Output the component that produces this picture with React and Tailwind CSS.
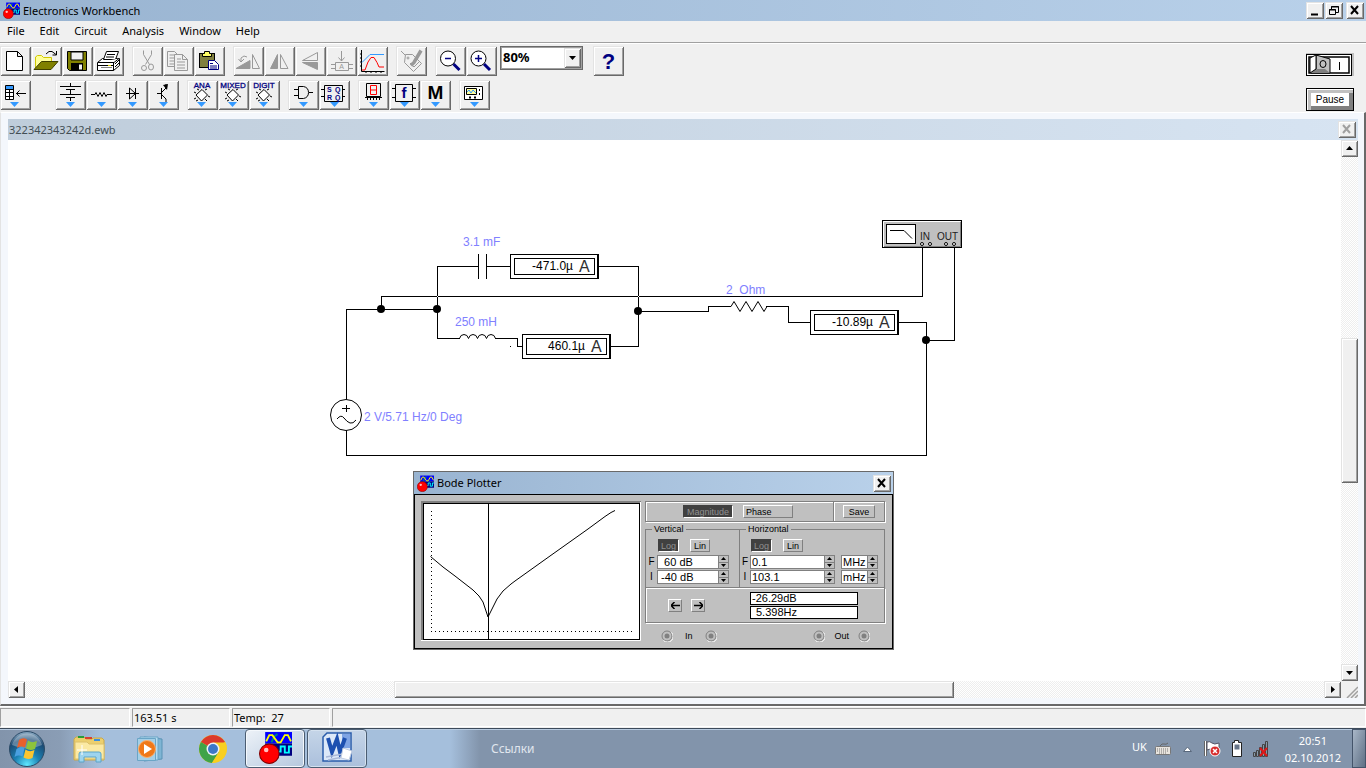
import React from 'react';
import clsx from 'clsx';

const raised = 'bg-[#f0f0f0] shadow-[inset_1px_1px_0_#e3e3e3,inset_-1px_-1px_0_#696969,inset_2px_2px_0_#fff,inset_-2px_-2px_0_#a0a0a0]';
const etched = 'border border-[#808080] shadow-[1px_1px_0_#fff,inset_1px_1px_0_#fff]';
const track = 'bg-[repeating-conic-gradient(#ffffff_0_25%,#eeeeee_0_50%)] bg-[length:2px_2px]';

const AppIcon = ({ size }) => (
    <svg width={size} height={size} viewBox="0 0 32 32">
        <path d="M6 1h26v11H6z" fill="#0000ff" />
        <path d="M6 12h26v12H6z" fill="#000080" />
        <path d="M12 11l3-6 3-2" fill="none" stroke="#008080" strokeWidth="2" />
        <path d="M7 10l3-6h3l5 7h3l4-7h3l3 6" fill="none" stroke="#ffff00" strokeWidth="1.8" />
        <path d="M17 20h4v-5h4v6h4v-6h3" fill="none" stroke="#00ffff" strokeWidth="1.8" />
        <circle cx="10" cy="22" r="9.5" fill="#ff0000" stroke="#800000" />
        <circle cx="7" cy="18.500" r="2.200" fill="#ffc0c0" />
    </svg>
);

const TRI = <path d="M11 22h9l-4.500 5z" fill="#3399ff" />;
const TRI_LEFT = <path d="M10 22h9l-4.500 5z" fill="#3399ff" />;
const CHIP = (
    <g stroke="#000" fill="none">
        <path d="M15 9.500l5.500 5.500-6 6-5.500-6z" fill="#fff" />
        <path d="M12 10l-2-1M9 13l-2-1M18 19l2 2M21 16l2 1M18 10l2-1M9 18l-2 1M11 20l-2 1" />
    </g>
);
const chipLabel = (text) => (
    <text x="15" y="8" textAnchor="middle" fontSize="8" fill="#000080" stroke="#000080" strokeWidth="0.3">{text}</text>
);

const ICONS = {
    new: <path d="M6.500 5.500h11l5 5v14h-16zM17.500 5.500v5h5" fill="#fff" stroke="#000" />,
    open: (
        <g>
            <path d="M4.500 22v-11l2-1.500h4l2 2h8v4h-9l-6 7z" fill="#ffff99" stroke="#d0c800" />
            <path d="M10.500 15.500h16.500l-7 8h-17z" fill="#808000" stroke="#404000" />
            <path d="M15 8l3-2.500h3l4 3M25.500 5v4h-4" fill="none" stroke="#000" />
        </g>
    ),
    save: (
        <g>
            <path d="M5.500 5.500h19v19h-17l-2-2z" fill="#808000" stroke="#000" />
            <path d="M9 6h12v8H9z" fill="#f0f0f0" stroke="#000" />
            <path d="M9 17h12v7H9z" fill="#000" />
            <path d="M17 18.500h3v5h-3z" fill="#f0f0f0" />
        </g>
    ),
    print: (
        <g stroke="#000" fill="#fff">
            <path d="M4.500 16.500l5-4h17v7l-6 5h-16z" />
            <path d="M10.500 13.500l3-8h12l-3 8z" />
            <path d="M14 8.500h8M13 11h8M5 16.500h16l5-4M5 19.500h16M20.500 16.500v8M22 18l4-4M22 21l4-4" />
            <path d="M8 21.500h11" stroke="#808080" />
            <path d="M15 19.500h3" stroke="#e0d000" />
        </g>
    ),
    cut: (
        <g stroke="#999" fill="none">
            <path d="M11.500 4.500v4l6 10M19.500 4.500v4l-6 10" />
            <circle cx="12" cy="22" r="2.500" />
            <ellipse cx="19" cy="21" rx="2.500" ry="3" />
        </g>
    ),
    copy: (
        <g stroke="#999" fill="#f0f0f0">
            <path d="M4.500 5.500h7l4 4v11h-11zM6.500 9h5M6.500 12h6M6.500 15h6M6.500 18h6" />
            <path d="M11.500 8.500h8l5 5v11h-13zM19.500 8.500v5h5M14 13h4M14 16h8M14 19h8M14 22h8" />
        </g>
    ),
    paste: (
        <g>
            <rect x="5.500" y="7.500" width="15" height="14" fill="#808040" stroke="#000" />
            <path d="M8.500 10.500v-3h2v-2h5v2h2v3z" fill="#ffff66" stroke="#000" />
            <path d="M14.500 14.500h6l4 4v5h-10z" fill="#fff" stroke="#000080" />
            <path d="M16 17.500h3M16 20h7M16 22h7" stroke="#000080" />
        </g>
    ),
    rotate: (
        <g stroke="#999">
            <path d="M3 22.500l14-8v8z" fill="#999" />
            <path d="M19.500 22.500v-14l7 14z" fill="none" />
            <path d="M14 11l-3-1-3 2v4M5.500 13l2.500 3 3-3" fill="none" />
        </g>
    ),
    flipH: (
        <g stroke="#999">
            <path d="M13.500 8.500v14h-7z" fill="#999" />
            <path d="M16.500 8.500v14h7.500z" fill="none" />
        </g>
    ),
    flipV: (
        <g stroke="#999">
            <path d="M22.500 6.500v8h-15z" fill="none" />
            <path d="M7.500 16.500h15v7z" fill="#999" />
        </g>
    ),
    subcircuit: (
        <g stroke="#999" fill="none">
            <path d="M15.500 5v10M12.500 11.500l3 3.500 3-3.500M9.500 16.500h13v8h-13zM5 18.500h4M5 22.500h4M23 18.500h4M23 22.500h4" />
            <text x="15.500" y="23" fontSize="7" stroke="none" fill="#999" textAnchor="middle">A</text>
        </g>
    ),
    graph: (
        <g fill="none">
            <path d="M4.500 4v21.500h23M3 8h2M3 12h2M3 16h2M3 20h2M9 25v2M14 25v2M19 25v2M24 25v2" stroke="#000" />
            <path d="M5 16.500l8-8h14" stroke="#3399ff" />
            <path d="M5 24h3l3-8 3-4.500h3l3 5 2 4.500h5" stroke="#ff0000" />
        </g>
    ),
    pen: (
        <g stroke="#999" fill="none">
            <path d="M5 5l4 4M9.500 8.500h7l9 9-8 8-9-9z" />
            <circle cx="12" cy="12" r="1" />
            <path d="M25 4.500l-7 12-3 3" strokeWidth="3.500" />
            <path d="M14 17l4 4 6-6" />
        </g>
    ),
    zoomOut: (
        <g>
            <circle cx="13" cy="12.500" r="7.500" fill="#fff" stroke="#000" />
            <path d="M10 12.500h6" stroke="#000080" strokeWidth="1.500" />
            <path d="M18.500 18l6 6" stroke="#000080" strokeWidth="3" />
        </g>
    ),
    zoomIn: (
        <g>
            <circle cx="12.500" cy="12.500" r="7.500" fill="#fff" stroke="#000" />
            <path d="M9 12.500h7M12.500 9v7" stroke="#000080" strokeWidth="1.500" />
            <path d="M18 18l6 6" stroke="#000080" strokeWidth="3" />
        </g>
    ),
    help: <text x="15.500" y="23" fontSize="22" fontWeight="bold" fill="#000080" textAnchor="middle">?</text>,
    parts: (
        <g>
            <path d="M5.500 5.500h8v14h-8z" fill="#fff" stroke="#000" />
            <path d="M6 6h7v3H6z" fill="#3399ff" />
            <path d="M5 9.500h9M5 12.500h9M5 16.500h9M9.500 9v11" stroke="#000" />
            <path d="M16 13.500h10M19.500 10.500l-3 3 3 3" fill="none" stroke="#000" />
            {TRI_LEFT}
        </g>
    ),
    battery: <g><path d="M5 6.500h21M15.500 3v3M11 9.500h9M5 14.500h21M11 17.500h9M15.500 10v4M15.500 18v3" stroke="#000" />{TRI}</g>,
    resistor: <g><path d="M5 14.500h4l1-2 2 4 2-4 2 4 2-4 2 4 1-2h5" fill="none" stroke="#000" />{TRI}</g>,
    diode: <g><path d="M9 13.500h13M12.500 8v11l6-5.500zM18.500 8v11" fill="none" stroke="#000" />{TRI}</g>,
    transistor: (
        <g>
            <path d="M9 13.500h4M13.500 8v11M14 12l4-4v-4M14 15l4 4v3" fill="none" stroke="#000" />
            <path d="M15 5l5-1-1 6z" />
            {TRI}
        </g>
    ),
    ana: <g>{CHIP}{chipLabel('ANA')}{TRI_LEFT}</g>,
    mixed: <g>{CHIP}{chipLabel('MIXED')}{TRI_LEFT}</g>,
    digit: <g>{CHIP}{chipLabel('DIGIT')}{TRI_LEFT}</g>,
    gate: <g><path d="M10.500 6.500h5q5 1 5 6t-5 6h-5zM6 9.500h4M6 15.500h4M21 12.500h4" fill="none" stroke="#000" />{TRI}</g>,
    flipflop: (
        <g>
            <path d="M5.500 5.500h18v16h-18zM2 9.500h3M2 16.500h3M24 9.500h2M24 16.500h2" fill="none" stroke="#000" />
            <g fontSize="7" fontWeight="bold" fill="#000080">
                <text x="8" y="12">S</text><text x="16" y="12">Q</text>
                <text x="8" y="20">R</text><text x="16" y="20">Q</text>
            </g>
            {TRI}
        </g>
    ),
    display: (
        <g fill="none">
            <path d="M8.500 3.500h14v13h-14zM7 17.500h17M9.500 18v2M12.500 18v2M15.500 18v2M18.500 18v2M21.500 18v2" stroke="#000" />
            <path d="M12.500 5.500h6v9h-6zM12.500 10h6" stroke="#ff0000" />
            {TRI}
        </g>
    ),
    func: (
        <g>
            <path d="M6.500 4.500h17v17h-17zM3 8.500h3M3 17.500h3M24 8.500h3M24 17.500h3" fill="none" stroke="#000" />
            <text x="15" y="18" fontSize="15" fontWeight="bold" fill="#000080" textAnchor="middle">f</text>
            {TRI}
        </g>
    ),
    misc: <g><text x="15.500" y="19" fontSize="19" fontWeight="bold" textAnchor="middle">M</text>{TRI}</g>,
    scope: (
        <g>
            <path d="M5.500 6.500h18v13h-18z" fill="#fff" stroke="#000" />
            <path d="M7.500 8.500h10v6h-10z" fill="#ffffa0" stroke="#000" />
            <path d="M8 12l2-2 2 3 2-3 3 3" fill="none" stroke="#3399ff" />
            <path d="M20 9h1v2h-1zM20 13h1v2h-1zM10 16.500h2v2h-2zM15 16.500h2v2h-2z" fill="#000" />
            {TRI}
        </g>
    ),
};

const ToolGroup = ({ names, className }) => (
    <div className={clsx('flex', className)}>
        {names.map((name) => (
            <button key={name} type="button" aria-label={name} className={clsx('h-[30px] w-[31px]', raised)}>
                <svg width="31" height="30" viewBox="0 0 31 30" fontFamily="Liberation Sans, sans-serif">{ICONS[name]}</svg>
            </button>
        ))}
    </div>
);

const CaptionButton = ({ label, children, className }) => (
    <button type="button" aria-label={label} className={clsx('h-[17px] w-[18px]', raised, className)}>
        <svg width="18" height="17" viewBox="0 0 18 17">{children}</svg>
    </button>
);
const CROSS = 'M5 4l7 8M12 4l-7 8';

const TitleBar = () => (
    <header className="flex h-[21px] shrink-0 items-center bg-linear-to-r from-[#99b4d1] to-[#b9d1ea] pr-[2px] pl-[3px]">
        <AppIcon size={17} />
        <h1 className="ml-[3px] flex-1">Electronics Workbench</h1>
        <CaptionButton label="Minimize"><path d="M5 12.500h7" stroke="#000" strokeWidth="2" /></CaptionButton>
        <CaptionButton label="Restore" className="ml-px">
            <path d="M6.500 7V4.500h7v6H11M6 5h8M4.500 7.500h6v5h-6zM4 8h7" fill="none" stroke="#000" />
        </CaptionButton>
        <CaptionButton label="Close" className="ml-[3px]"><path d={CROSS} stroke="#000" strokeWidth="2" /></CaptionButton>
    </header>
);

const MenuBar = () => (
    <nav className="flex h-[22px] shrink-0 items-center gap-[15px] border-b border-[#a0a0a0] pb-[2px] pl-[7px]">
        {['File', 'Edit', 'Circuit', 'Analysis', 'Window', 'Help'].map((m) => (
            <button key={m} type="button">{m}</button>
        ))}
    </nav>
);

const Toolbars = () => (
    <div className="flex shrink-0 justify-between border-t border-white pt-[2px]">
        <div className="flex flex-col gap-1">
            <div className="flex gap-2">
                <ToolGroup names={['new', 'open', 'save', 'print']} />
                <ToolGroup names={['cut', 'copy', 'paste']} />
                <ToolGroup names={['rotate', 'flipH', 'flipV', 'subcircuit', 'graph']} />
                <ToolGroup names={['pen']} />
                <ToolGroup names={['zoomOut', 'zoomIn']} />
                <div className="relative -ml-[5px] h-6 w-[83px]">
                    <select aria-label="Zoom" className="h-full w-full appearance-none border border-[#696969] bg-white pb-[2px] pl-[2px] text-[13px] leading-4 font-bold shadow-[inset_0_0_0_1px_#a0a0a0]">
                        <option>80%</option>
                    </select>
                    <span className={clsx('pointer-events-none absolute top-[2px] right-[2px] flex h-5 w-[17px] items-center justify-center', raised)}>
                        <svg width="7" height="4"><path d="M0 0h7l-3.500 4z" /></svg>
                    </span>
                </div>
                <ToolGroup names={['help']} className="ml-[2px]" />
            </div>
            <div className="flex gap-2">
                <ToolGroup names={['parts']} className="mr-4" />
                <ToolGroup names={['battery', 'resistor', 'diode', 'transistor']} />
                <ToolGroup names={['ana', 'mixed', 'digit']} />
                <ToolGroup names={['gate', 'flipflop']} />
                <ToolGroup names={['display', 'func', 'misc']} />
                <ToolGroup names={['scope']} />
            </div>
        </div>
        <div className="mt-[7px] mr-3 flex flex-col items-start gap-[12px]">
            <button type="button" aria-label="Power" className="border-t border-r-2 border-[#c0c0c0]">
                <svg width="46" height="22" viewBox="0 0 46 22" className="block">
                    <rect x="0.500" y="0.500" width="45" height="21" fill="#fff" stroke="#000" />
                    <rect x="3" y="3" width="40" height="16" fill="#fff" stroke="#000" strokeWidth="1.500" />
                    <path d="M10 1l14 4v14H5l5-4z" fill="#c0c0c0" stroke="#000" />
                    <path d="M4 19l6-4h9l5 4z" fill="#808080" />
                    <path d="M4 4l6-3v14l-6 4z" fill="#fff" stroke="#000" />
                    <ellipse cx="17" cy="10" rx="3" ry="3.500" fill="none" stroke="#000" />
                    <path d="M33.500 8v8" stroke="#000" />
                </svg>
            </button>
            <button type="button" className="h-[23px] w-12 border border-black bg-white font-['Liberation_Sans',sans-serif] text-[10px] shadow-[inset_1px_1px_0_#fff,inset_4px_4px_0_#c0c0c0,inset_-4px_-4px_0_#808080]">
                Pause
            </button>
        </div>
    </div>
);

const Meter = ({ x, y, value }) => (
    <g transform={`translate(${x} ${y})`}>
        <rect x="0.500" y="0.500" width="88" height="24" fill="#fff" stroke="#000" />
        <path d="M87.500 0v25" stroke="#000" />
        <rect x="4.500" y="4.500" width="80" height="16" fill="#fff" stroke="#000" />
        <text x="63" y="16" textAnchor="end" fontSize="12">{value}</text>
        <text x="69" y="18" fontSize="16" fill="#303030">A</text>
    </g>
);

const Circuit = () => (
    <svg width="960" height="480" viewBox="8 140 960 480" className="block shrink-0" fontFamily="Liberation Sans, sans-serif">
        <g fill="none" stroke="#000" shapeRendering="crispEdges">
            <path d="M381.500 309V296.500H922.500V247M954.500 247V340.500H926" />
            <path d="M346.500 400V309.500H437.500M437.500 266V338.500H460M437 266.500H478M487 266.500H510M599 266.500H638.500V346.500H610" />
            <path d="M495 338.500H517.500V346.500H522M638 311.500H708.500V306.500H731M766 306.500H788.500V322.500H810" />
            <path d="M899 322.500H926.500V455.500H346.500V430" />
            <path d="M478.500 254v25M486.500 254v25M510 346.500h1" />
        </g>
        <path d="M437 296.500h1M638 296.500h1" stroke="#fff" />
        <g fill="none" stroke="#000">
            <path d="M459.500 338.500q1-4 4.500-4t4.500 4q1-4 4.500-4t4.500 4q1-4 4.500-4t4.500 4q1-4 4.500-4t4.500 4" />
            <path d="M731 306.500l3-5 6 10 6-10 6 10 6-10 6 10 3-5" />
            <circle cx="346" cy="415" r="15.500" fill="#fff" />
            <path d="M342 408.500h8M346.500 405v7M337 419q4-5 7-1t6 5 6-3" />
        </g>
        <circle cx="381" cy="309" r="4" />
        <circle cx="437" cy="309" r="4" />
        <circle cx="638" cy="311" r="4" />
        <circle cx="926" cy="340" r="4" />
        <Meter x={510} y={254} value="-471.0µ" />
        <Meter x={522} y={334} value="460.1µ" />
        <Meter x={810} y={310} value="-10.89µ" />
        <g fontSize="12" fill="#8080ff">
            <text x="463" y="246">3.1 mF</text>
            <text x="455" y="326">250 mH</text>
            <text x="726" y="294" xmlSpace="preserve">2  Ohm</text>
            <text x="364" y="421">2 V/5.71 Hz/0 Deg</text>
        </g>
        <rect x="882.500" y="220.500" width="79" height="27" fill="#c0c0c0" stroke="#000" />
        <path d="M883.500 247v-25.500h77" fill="none" stroke="#fff" />
        <path d="M884 246.500h76.500V222" fill="none" stroke="#808080" />
        <rect x="886.500" y="224.500" width="29" height="19" fill="#fff" stroke="#000" />
        <path d="M890 230.500h14l8 8" fill="none" stroke="#000" />
        <g fontSize="10" fill="#202020">
            <text x="920" y="240">IN</text>
            <text x="937" y="240">OUT</text>
        </g>
        <g fill="#fff" stroke="#000">
            <circle cx="922" cy="244" r="1.500" />
            <circle cx="930" cy="244" r="1.500" />
            <circle cx="946" cy="244" r="1.500" />
            <circle cx="954" cy="244" r="1.500" />
        </g>
    </svg>
);

const TinyButton = ({ children, pressed, className, ...rest }) => (
    <button
        type="button"
        aria-pressed={pressed}
        className={clsx(
            'flex h-[13px] items-center border leading-3',
            pressed ? 'border-[#404040] border-r-white border-b-white bg-[#404040] text-[#909090]' : 'border-white border-r-[#808080] border-b-[#808080] bg-[#c0c0c0]',
            className
        )}
        {...rest}
    >
        {children}
    </button>
);

const Spinner = ({ label, value, className }) => (
    <span className="flex h-[14px]">
        <input aria-label={label} defaultValue={value} className={clsx('border border-[#808080] border-r-0 bg-white text-[11px] leading-3 whitespace-pre', className)} />
        <span className="flex w-[11px] flex-col border border-[#808080]">
            <button type="button" aria-label={`${label} up`} className="flex flex-1 items-center justify-center border-b border-[#808080]">
                <svg width="5" height="3"><path d="M0 3h5l-2.500-3z" /></svg>
            </button>
            <button type="button" aria-label={`${label} down`} className="flex flex-1 items-center justify-center">
                <svg width="5" height="3"><path d="M0 0h5l-2.500 3z" /></svg>
            </button>
        </span>
    </span>
);

const Port = () => (
    <svg width="12" height="12" viewBox="0 0 12 12">
        <circle cx="6" cy="6" r="5" fill="#c0c0c0" stroke="#808080" />
        <path d="M10.500 2.500a5.500 5.500 0 0 1-8 8" fill="none" stroke="#fff" />
        <circle cx="6" cy="6" r="2.500" fill="#808080" />
    </svg>
);

const Plot = () => (
    <svg width="220" height="140" viewBox="421 501 220 140" className="block">
        <path d="M421 641V501h220" fill="none" stroke="#808080" strokeWidth="4" />
        <path d="M421 640.500h219.500V502" fill="none" stroke="#fff" />
        <rect x="423.500" y="503.500" width="216" height="136" fill="#fff" stroke="#000" />
        <g fill="none" stroke="#000" shapeRendering="crispEdges">
            <path d="M431.500 511v121M431 631.500h202" strokeDasharray="1 3" />
            <path d="M488.500 504v135" />
        </g>
        <path
            d="M430.500 556.500L443 567l12 9 18 14 6 6 4 6 3 9 2 6M488 617l9-18 6-8 8-7 4-3 35-25 38-27 17-12.500 6-4 4-2"
            fill="none"
            stroke="#000"
        />
    </svg>
);

const BodePlotter = () => (
    <section className="absolute top-[331px] left-[405px] w-[481px] border border-[#696969] bg-[#c0c0c0]">
        <div className="flex h-[22px] items-center bg-linear-to-r from-[#99b4d1] to-[#b9d1ea] pr-[2px] pl-[3px]">
            <AppIcon size={17} />
            <h2 className="ml-[3px] flex-1">Bode Plotter</h2>
            <CaptionButton label="Close plotter"><path d={CROSS} stroke="#000" strokeWidth="2" /></CaptionButton>
        </div>
        <div className="flex gap-1 border border-black pt-[6px] pr-[7px] pl-[6px] font-['Liberation_Sans',sans-serif] text-[9px] leading-3">
            <Plot />
            <div className="flex flex-1 flex-col">
                <div className={clsx('flex h-[21px]', etched)}>
                    <div className="flex flex-1 items-center gap-[10px] pl-[37px]">
                        <TinyButton pressed className="w-[50px] justify-center">Magnitude</TinyButton>
                        <TinyButton className="w-[50px] pl-[2px]">Phase</TinyButton>
                    </div>
                    <div className="flex items-center border-l border-[#808080] pr-[9px] pl-[9px] shadow-[inset_1px_0_0_#fff]">
                        <TinyButton className="w-8 justify-center">Save</TinyButton>
                    </div>
                </div>
                <div className="mt-px flex">
                    <fieldset className="w-[94px] border border-r-0 border-[#808080] pb-[2px]">
                        <legend className="ml-[6px] px-[2px]">Vertical</legend>
                        <div className="mt-[4px] mb-[3px] flex gap-[11px] pl-3">
                            <TinyButton pressed className="w-[21px] justify-center">Log</TinyButton>
                            <TinyButton className="w-5 justify-center">Lin</TinyButton>
                        </div>
                        {[['F', '  60 dB'], ['I', ' -40 dB']].map(([k, v]) => (
                            <label key={k} className="mb-px flex items-center">
                                <span className="w-[11px] text-center text-[10px]">{k}</span>
                                <Spinner label={`Vertical ${k}`} value={v} className="w-[61px]" />
                            </label>
                        ))}
                    </fieldset>
                    <fieldset className="flex-1 border border-[#808080] pb-[2px]">
                        <legend className="ml-[6px] px-[2px]">Horizontal</legend>
                        <div className="mt-[4px] mb-[3px] flex gap-[11px] pl-[11px]">
                            <TinyButton pressed className="w-[21px] justify-center">Log</TinyButton>
                            <TinyButton className="w-5 justify-center">Lin</TinyButton>
                        </div>
                        {[['F', '0.1', 'MHz'], ['I', '103.1', 'mHz']].map(([k, v, u]) => (
                            <div key={k} className="mb-px flex items-center">
                                <span className="w-[10px] text-center text-[10px]">{k}</span>
                                <Spinner label={`Horizontal ${k}`} value={v} className="w-[74px] pl-px" />
                                <span className="w-[6px]" />
                                <Spinner label={`Horizontal ${k} unit`} value={u} className="w-[26px] pl-px" />
                            </div>
                        ))}
                    </fieldset>
                </div>
                <div className="flex h-[35px] items-center border border-t-0 border-[#808080] shadow-[1px_1px_0_#fff,inset_1px_1px_0_#fff]">
                    <div className="flex w-[104px] gap-[9px] pl-[22px]">
                        <TinyButton aria-label="Cursor left" className="w-[14px] justify-center">
                            <svg width="9" height="7"><path d="M0 3.500h9M3.500 0L0 3.500 3.500 7" fill="none" stroke="#000" strokeWidth="1.500" /></svg>
                        </TinyButton>
                        <TinyButton aria-label="Cursor right" className="w-[14px] justify-center">
                            <svg width="9" height="7"><path d="M0 3.500h9M5.500 0L9 3.500 5.500 7" fill="none" stroke="#000" strokeWidth="1.500" /></svg>
                        </TinyButton>
                    </div>
                    <div className="flex flex-col gap-px text-[11px]">
                        <output className="h-[13px] w-[108px] border border-black bg-white pl-px leading-[11px]">-26.29dB</output>
                        <output className="h-[13px] w-[108px] border border-black bg-white pl-[5px] leading-[11px]">5.398Hz</output>
                    </div>
                </div>
                <div className="flex h-[25px] items-center justify-between pr-[15px] pl-4">
                    <span className="flex items-center gap-3"><Port />In<Port /></span>
                    <span className="flex items-center gap-[9px]"><Port />Out<Port /></span>
                </div>
            </div>
        </div>
    </section>
);

const ScrollArrow = ({ label, d }) => (
    <button type="button" aria-label={label} className={clsx('h-[17px] w-[17px] shrink-0', raised)}>
        <svg width="17" height="17" viewBox="0 0 17 17"><path d={d} /></svg>
    </button>
);

const DocumentWindow = () => (
    <main className="flex min-h-0 flex-1 flex-col border-t border-r-2 border-b-2 border-l border-t-white border-r-[#696969] border-b-[#696969] border-l-[#e3e3e3] bg-[#f4f7fc] px-[6px] pt-[6px] pb-[6px] pl-[7px]">
        <div className="flex h-[21px] shrink-0 items-center justify-between bg-linear-to-r from-[#bfcddb] to-[#d7e4f2] pr-[2px] pl-px text-[#434e54]">
            <h2>322342343242d.ewb</h2>
            <CaptionButton label="Close document"><path d={CROSS} stroke="#a0a0a0" strokeWidth="2" /></CaptionButton>
        </div>
        <div className="flex min-h-0 flex-1">
            <div className="relative min-w-0 flex-1 overflow-hidden bg-white">
                <Circuit />
                <BodePlotter />
            </div>
            <div className={clsx('flex w-[17px] flex-col', track)}>
                <ScrollArrow label="Scroll up" d="M5 10h7L8.500 6z" />
                <div className="flex-[181]" />
                <div className={clsx('flex-[144]', raised)} />
                <div className="flex-[181]" />
                <ScrollArrow label="Scroll down" d="M5 7h7l-3.500 4z" />
            </div>
        </div>
        <div className="flex h-[17px] shrink-0">
            <div className={clsx('flex flex-1', track)}>
                <ScrollArrow label="Scroll left" d="M10 5v7L6 8.500z" />
                <div className="flex-[369]" />
                <div className={clsx('flex-[560]', raised)} />
                <div className="flex-[370]" />
                <ScrollArrow label="Scroll right" d="M7 5v7l4-3.500z" />
            </div>
            <svg width="17" height="17" className="bg-[#f0f0f0]">
                <path d="M6 17L17 6M10 17l7-7M14 17l3-3" stroke="#a0a0a0" strokeWidth="1.500" />
            </svg>
        </div>
    </main>
);

const StatusBar = () => (
    <footer className="flex h-[22px] shrink-0 gap-[2px] border-t border-white pt-px pb-px">
        {[['w-[130px]', ''], ['w-[98px]', '163.51 s'], ['w-[98px]', 'Temp:  27'], ['flex-1', '']].map(([w, text], i) => (
            <div key={i} className={clsx('border border-[#a0a0a0] border-r-white border-b-white pl-px leading-[17px] whitespace-pre', w)}>{text}</div>
        ))}
    </footer>
);

const StartOrb = () => (
    <svg width="38" height="38" viewBox="0 0 38 38">
        <defs>
            <radialGradient id="orb" cx="0.5" cy="0.95" r="0.9">
                <stop offset="0" stopColor="#5fe8ff" />
                <stop offset="0.4" stopColor="#1c82b4" />
                <stop offset="0.8" stopColor="#1b4a73" />
                <stop offset="1" stopColor="#7e9fba" />
            </radialGradient>
        </defs>
        <circle cx="19" cy="19" r="17.500" fill="url(#orb)" stroke="#2b4a66" />
        <path d="M4 15a15.500 15.500 0 0 1 30 0q-15 7-30 0z" fill="#fff" opacity="0.3" />
        <path d="M11 10q4-3 8-.5l-2 8q-4-2-8 .5z" fill="#e8602c" />
        <path d="M20 10.500q4 3 9 .5l-2 8q-5 2-9-.5z" fill="#8cc43c" />
        <path d="M8.500 19q4-3 8-.5l-2 8q-4-2-8 .5z" fill="#4aa0e0" />
        <path d="M17.500 19.500q4 3 9 .5l-2 8q-5 2-9-.5z" fill="#fcc530" />
    </svg>
);

const ExplorerIcon = () => (
    <svg width="32" height="30" viewBox="0 0 32 30">
        <path d="M1 5l2-2h8l2 2h6l1-1h9l2 2v20H1z" fill="#eccf6e" stroke="#c8a84a" />
        <path d="M5 2h6v2H5z" fill="#2a9d3a" /><path d="M12 3h7v2h-7z" fill="#d84030" /><path d="M21 5h6v2h-6z" fill="#3a8ee0" />
        <path d="M2 8h12l2 2h15v15H2z" fill="#fbe9a3" stroke="#dcc06a" />
        <path d="M6 28V20q0-2 2-2h18q2 0 2 2v8h-5v-5H11v5z" fill="#9ed4ee" stroke="#5ba4c8" />
        <path d="M9 11v10M4 16h10" stroke="#fff" />
    </svg>
);

const PlayerIcon = () => (
    <svg width="30" height="28" viewBox="0 0 30 28">
        <path d="M8 2l18 2v20l-18 2z" fill="#7fb5d4" stroke="#5a93b5" />
        <path d="M4 2h18v23H4z" fill="#b6dcf0" stroke="#6aa5c6" />
        <path d="M1.500 3.500h18v22h-18z" fill="#a5cfe6" stroke="#6aa5c6" />
        <circle cx="11" cy="14" r="8.500" fill="#f07818" stroke="#f8b070" />
        <path d="M8 9l8 5-8 5z" fill="#fff" />
    </svg>
);

const ChromeIcon = () => (
    <svg width="30" height="30" viewBox="0 0 30 30">
        <circle cx="15" cy="15" r="14" fill="#f8cf20" />
        <path d="M15 15L2.900 8a14 14 0 0 1 24.200 0z" fill="#db3a2c" />
        <path d="M2.900 8a14 14 0 0 0 11 21l7-11-6-3z" fill="#3fa348" />
        <path d="M15 8.500h12.500q3 8-2.500 14t-11 6.500L21 18z" fill="#f8cf20" />
        <circle cx="15" cy="15" r="6.500" fill="#eef3f8" />
        <circle cx="15" cy="15" r="5" fill="#3c78c8" />
    </svg>
);

const WordIcon = () => (
    <svg width="32" height="32" viewBox="0 0 32 32">
        <path d="M6 2h24v28H2V6z" fill="#dce8f8" stroke="#2a5caa" strokeWidth="1.500" />
        <path d="M21 3h8v14h-8z" fill="#7fa4e4" />
        <path d="M7 7l4 14 5-13 3 13 5-14" fill="none" stroke="#1d50b0" strokeWidth="4" />
        <path d="M5 26l17-3M7 29l15-3" stroke="#a9b8d8" strokeWidth="1.500" />
        <path d="M22 17l9 3-3 9-8-2z" fill="#fff" stroke="#c0cce0" />
    </svg>
);

const Taskbar = () => (
    <div className="flex h-10 shrink-0 items-stretch border-t border-[#3c4a5a] bg-[linear-gradient(90deg,#8294ab_0,#8a9db5_60px,#a5bfdc_100px,#a5bfdc_450px,#8294ab_480px)] text-white shadow-[inset_0_1px_0_#b8cbe0]">
        <button type="button" aria-label="Start" className="flex w-[58px] items-center pl-2"><StartOrb /></button>
        <button type="button" aria-label="Explorer" className="flex w-[62px] items-center justify-center"><ExplorerIcon /></button>
        <button type="button" aria-label="Media Player" className="flex w-[62px] items-center justify-center"><PlayerIcon /></button>
        <button type="button" aria-label="Chrome" className="flex w-[62px] items-center justify-center"><ChromeIcon /></button>
        <button type="button" aria-label="Electronics Workbench" className="ml-px flex w-[60px] items-start justify-center rounded-sm border border-[#4b5d72] bg-linear-to-br from-[#edf2f8] to-[#b5c8de] pt-px shadow-[inset_0_0_0_1px_#f4f8fc]"><AppIcon size={33} /></button>
        <button type="button" aria-label="Word" className="ml-[2px] flex w-[60px] items-start justify-center rounded-sm border border-[#4b5d72] bg-linear-to-b from-[#c5d5e8] to-[#abc0dc] pt-px shadow-[inset_0_0_0_1px_#d4e1ef]"><WordIcon /></button>
        <span className="ml-[124px] self-center text-[12px] text-[#e0e6ee]">Ссылки</span>
        <div className="ml-auto flex items-center">
            <span className="mr-2 pb-1">UK</span>
            <svg width="16" height="14" viewBox="0 0 16 14" className="mr-3">
                <path d="M5 4q2-3 4-2t4-1" fill="none" stroke="#666" />
                <rect x="0.500" y="4.500" width="15" height="8" rx="1" fill="#e8e4de" stroke="#777" />
                <path d="M2 7h12M2 9h12M4 11h8" stroke="#777" strokeDasharray="1 1" />
            </svg>
            <svg width="9" height="6" className="mr-3"><path d="M0.500 5.500h8L4.500 1z" fill="#fff" stroke="#59687c" /></svg>
            <svg width="17" height="17" viewBox="0 0 17 17" className="mr-[10px]">
                <path d="M1.500 1v15" stroke="#333" strokeWidth="3" /><path d="M1.500 1v15" stroke="#fff" strokeWidth="1.500" />
                <path d="M3 2q3-1 5 1t7 0v7q-4 2-6 0t-6 0z" fill="#fff" stroke="#556" />
                <circle cx="11" cy="11" r="5" fill="#d82c2c" stroke="#fff" /><path d="M9 9l4 4M13 9l-4 4" stroke="#fff" strokeWidth="1.500" />
            </svg>
            <svg width="12" height="17" viewBox="0 0 12 17" className="mr-[10px]">
                <path d="M3.500 2.500v-2h4v2h3v14h-9v-14z" fill="#fff" stroke="#222" />
                <path d="M3.500 4.500h5v5h-5z" fill="#667488" />
            </svg>
            <svg width="16" height="16" viewBox="0 0 16 16" className="mr-4">
                <path d="M0.500 11.500h2v4h-2zM3.500 9.500h2v6h-2zM6.500 6.500h2v9h-2zM9.500 3.500h2v12h-2zM12.500 0.500h2v15h-2z" fill="#8899aa" stroke="#444" />
                <path d="M7 7l7 8M14 7l-7 8" stroke="#e01818" strokeWidth="2" />
            </svg>
            <div className="mr-[11px] text-center leading-[17px]">
                <div>20:51</div>
                <div>02.10.2012</div>
            </div>
            <button type="button" aria-label="Show desktop" className="h-full w-[14px] border border-[#44546a] bg-linear-to-br from-[#a9b7c8] to-[#5f7085]" />
        </div>
    </div>
);

export default function App() {
    return (
        <div className="flex h-screen flex-col overflow-hidden bg-[#f0f0f0] font-['Noto_Sans',sans-serif] text-[11px] leading-4 text-black">
            <TitleBar />
            <MenuBar />
            <Toolbars />
            <div className="h-px shrink-0" />
            <DocumentWindow />
            <StatusBar />
            <Taskbar />
        </div>
    );
}
